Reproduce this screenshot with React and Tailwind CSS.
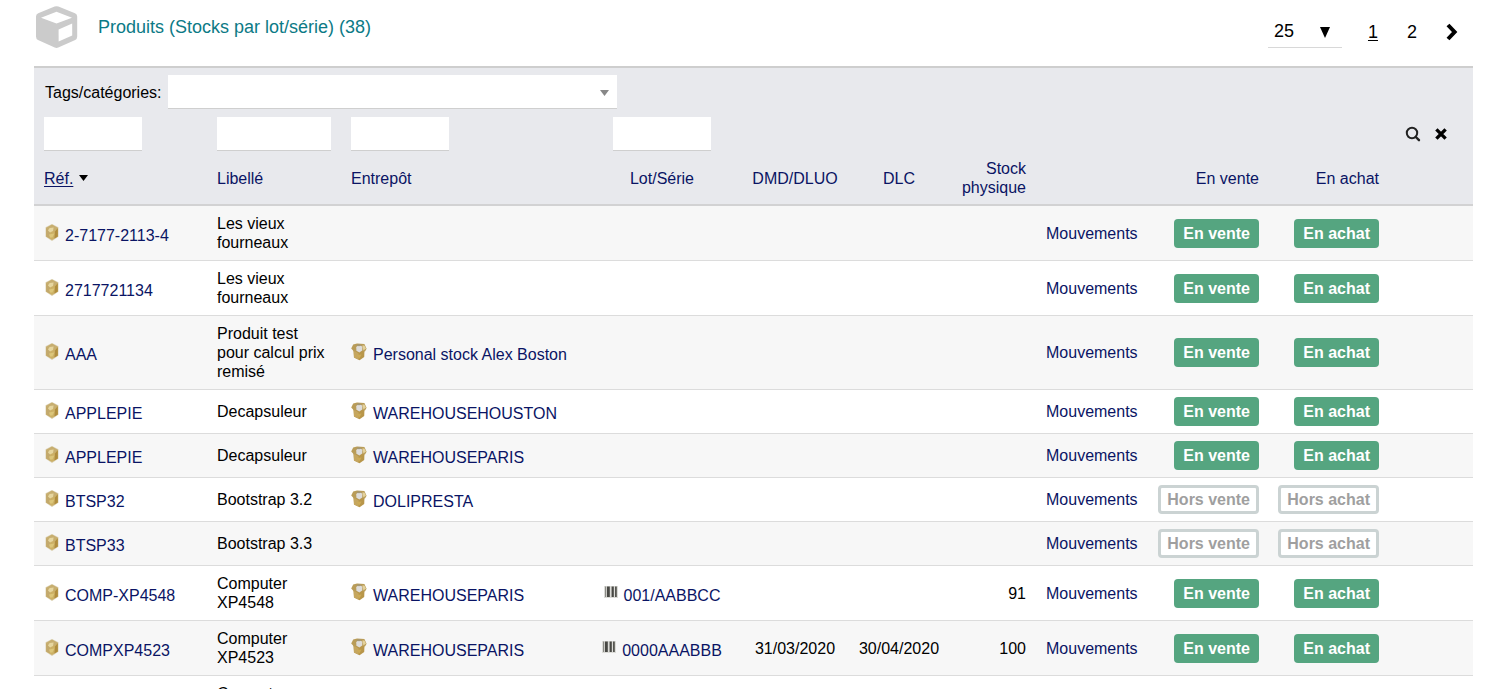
import React, { useState } from "react";

const products = [
  { id: 1, ref: "2-7177-2113-4", label: "Les vieux fourneaux", onSale: true },
  { id: 2, ref: "2717721134", label: "Les vieux fourneaux", onSale: true },
  {
    id: 3,
    ref: "AAA",
    label: "Produit test pour calcul prix remisé",
    warehouse: "Personal stock Alex Boston",
    onSale: true,
  },
  { id: 4, ref: "APPLEPIE", label: "Decapsuleur", warehouse: "WAREHOUSEHOUSTON", onSale: true },
  { id: 5, ref: "APPLEPIE", label: "Decapsuleur", warehouse: "WAREHOUSEPARIS", onSale: true },
  { id: 6, ref: "BTSP32", label: "Bootstrap 3.2", warehouse: "DOLIPRESTA", onSale: false },
  { id: 7, ref: "BTSP33", label: "Bootstrap 3.3", onSale: false },
  {
    id: 8,
    ref: "COMP-XP4548",
    label: "Computer XP4548",
    warehouse: "WAREHOUSEPARIS",
    lot: "001/AABBCC",
    stock: 91,
    onSale: true,
  },
  {
    id: 9,
    ref: "COMPXP4523",
    label: "Computer XP4523",
    warehouse: "WAREHOUSEPARIS",
    lot: "0000AAABBB",
    dluo: "31/03/2020",
    dlc: "30/04/2020",
    stock: 100,
    onSale: true,
  },
  { id: 10, ref: "COMPXP4523", label: "Computer XP4523", warehouse: "WAREHOUSEPARIS", onSale: true },
];

const CubeIcon = () => (
  <svg width="42" height="42" viewBox="0 0 42 42" aria-hidden="true">
    <path
      d="M18.6 .6Q20.5 -.2 22.4 .6L39 7.2Q41.2 8.2 41.2 10.6V30.6Q41.2 33 39.2 34L22.3 41.5Q20.5 42.3 18.7 41.5L2 34Q0 33 0 30.6V10.6Q0 8.2 2.2 7.2Z"
      fill="#cbcbcb"
    />
    <path d="M20.5 5.8L36 11.8L20.5 17.6L5 11.8Z" fill="#fff" />
    <path d="M22.6 23.4L36.2 17.6V29.4L22.6 35.6Z" fill="#fff" />
  </svg>
);

const ProductIcon = () => (
  <svg width="14" height="17" viewBox="0 0 14 17" className="shrink-0" aria-hidden="true">
    <path d="M7 0L13.4 3.2V12.8L7 17L.6 12.8V3.2Z" fill="#d8ccab" />
    <path d="M7 .8L12.8 4V12.4L7 16L1.2 12.4V4Z" fill="#ccb065" />
    <path d="M1.2 4L5 7.4V14.6L1.2 12.4Z" fill="#c3a96c" />
    <path d="M12.8 4L10 7.6L9.4 14.4L12.8 12.4Z" fill="#b08d3e" />
    <path d="M7 .8L12.8 4L10 6.6L5 7.4L1.2 4Z" fill="#c7ae70" />
    <path d="M4.6 4L8.6 3.4L8 7L5 8.4L3 6.4Z" fill="#e6d69f" />
    <path d="M4 10.4L9.4 9.6L7.4 13.6L5 13.4Z" fill="#dcc679" />
  </svg>
);

const WarehouseIcon = () => (
  <svg width="16" height="18" viewBox="0 0 16 18" className="shrink-0" aria-hidden="true">
    <path d="M2.4 5L13.6 5L13.2 14L8.6 17.2L3 14.4Z" fill="#b8964a" />
    <path d="M2.6 7L7.6 10.4V16.8L3 14.4Z" fill="#c5a65f" />
    <path d="M.2 5.4L2.2 1.6L6 .6L13.4 1L15.6 5.8L14 8.6L11 8L3 8.6Z" fill="#b99c58" />
    <path d="M11.4 2.6L13.4 2.4L15 5.6L12.4 7.4Z" fill="#e4d29c" />
    <path d="M5.2 4L8.2 1.8L11.4 3.8L11.2 7.4L8.4 9.6L5.4 7.8Z" fill="#dddcda" />
    <path d="M5 2.6L8 1L11 2.4L8 3.2Z" fill="#a59876" />
    <path d="M5.4 12L10.6 11.6L8.4 15.4Z" fill="#ccaa55" />
  </svg>
);

const BarcodeIcon = () => (
  <svg width="14" height="13" viewBox="0 0 14 13" className="shrink-0" aria-hidden="true">
    <path d="M0 0H14V12H0Z" fill="#dcdcd8" />
    <path d="M1 .5H2.2V11H1Z" fill="#8a8a86" />
    <path d="M3 .5H5.8V11H3ZM7.6 .5H9.8V11H7.6Z" fill="#484844" />
    <path d="M11 .5H12.8V11H11Z" fill="#555550" />
  </svg>
);

const SearchIcon = () => (
  <svg width="16" height="16" viewBox="0 0 16 16" fill="none" stroke="#222" aria-hidden="true">
    <circle cx="7" cy="7" r="5.2" strokeWidth="2" />
    <path d="M10.8 11L14 14.2" strokeWidth="2.4" strokeLinecap="round" />
  </svg>
);

const ClearIcon = () => (
  <svg width="12" height="12" viewBox="0 0 12 12" aria-hidden="true">
    <path d="M2.6 2.6L9.4 9.4M9.4 2.6L2.6 9.4" stroke="#000" strokeWidth="3.4" strokeLinecap="square" />
  </svg>
);

const StatusBadge = ({ active, onText, offText }) =>
  active ? (
    <span className="rounded bg-[#55a580] px-[9px] py-[5px] font-bold whitespace-nowrap text-white">{onText}</span>
  ) : (
    <span className="rounded border-3 border-[#cbd3d3] bg-white px-[6px] py-[2px] font-bold whitespace-nowrap text-[#9f9f9f]">
      {offText}
    </span>
  );

const IconLink = ({ icon, children }) => (
  <a href="#" className="inline-flex items-center gap-[6px] pt-1 align-middle whitespace-nowrap">
    <span className="pb-[6px]">{icon}</span>
    {children}
  </a>
);

const FilterInput = ({ label, value, onChange, className }) => (
  <input
    type="text"
    aria-label={label}
    value={value}
    onChange={(e) => onChange(e.target.value)}
    className={`block h-[34px] border-b border-[#cfcfcf] bg-white px-1 text-black outline-none ${className}`}
  />
);

const App = () => {
  // Filters
  const [limit, setLimit] = useState("25");
  const [category, setCategory] = useState("");
  const [searchRef, setSearchRef] = useState("");
  const [searchLabel, setSearchLabel] = useState("");
  const [searchWarehouse, setSearchWarehouse] = useState("");
  const [searchLot, setSearchLot] = useState("");

  const clearFilters = () => {
    setCategory("");
    setSearchRef("");
    setSearchLabel("");
    setSearchWarehouse("");
    setSearchLot("");
  };

  const matches = (text, search) => (text || "").toLowerCase().includes(search.toLowerCase());

  const filtered = products.filter(
    (p) =>
      matches(p.ref, searchRef) &&
      matches(p.label, searchLabel) &&
      matches(p.warehouse, searchWarehouse) &&
      matches(p.lot, searchLot)
  );

  return (
    <div className="h-screen overflow-hidden bg-white pr-4 pl-[34px] font-['Liberation_Sans',Arial,sans-serif] text-[16px] leading-[19px] text-black">
      {/* TITLE AND PAGINATION */}
      <header className="flex h-[66px] items-start justify-between pt-[6px] pl-[2px] text-[18px] leading-[22px]">
        <div className="flex items-center gap-5">
          <CubeIcon />
          <h1 className="text-[#0c7a86]">Produits (Stocks par lot/série) (38)</h1>
        </div>

        <nav className="flex items-center pt-[9px] pr-[15px]">
          <div className="relative mr-[26px]">
            <select
              aria-label="Nombre de lignes"
              value={limit}
              onChange={(e) => setLimit(e.target.value)}
              className="h-[33px] w-[74px] appearance-none border-b border-[#d8d8d8] pl-[6px] outline-none"
            >
              <option>25</option>
              <option>50</option>
              <option>100</option>
            </select>
            <svg
              width="10"
              height="11"
              viewBox="0 0 10 11"
              className="pointer-events-none absolute top-3 right-3"
              aria-hidden="true"
            >
              <path d="M0 0H10L5 11Z" />
            </svg>
          </div>
          <a href="#" className="mr-[29px] underline underline-offset-2">
            1
          </a>
          <a href="#" className="mr-[29px]">
            2
          </a>
          <a href="#" aria-label="Suivant">
            <svg width="12" height="18" viewBox="0 0 12 18" fill="none" aria-hidden="true">
              <path d="M2 2L8.6 9L2 16" stroke="#000" strokeWidth="4" />
            </svg>
          </a>
        </nav>
      </header>

      {/* CATEGORY FILTER */}
      <div className="flex items-center border-t-2 border-[#cecece] bg-[#e8e9ed] pt-[7px] pb-1 pl-[11px]">
        <label htmlFor="category">Tags/catégories:</label>
        <div className="relative ml-[6px]">
          <select
            id="category"
            value={category}
            onChange={(e) => setCategory(e.target.value)}
            className="block h-[34px] w-[449px] appearance-none border-b border-[#cfcfcf] bg-white px-2 outline-none"
          >
            <option value=""></option>
          </select>
          <svg
            width="9"
            height="6"
            viewBox="0 0 9 6"
            className="pointer-events-none absolute top-[15px] right-2"
            aria-hidden="true"
          >
            <path d="M0 0H9L4.5 6Z" fill="#888" />
          </svg>
        </div>
      </div>

      {/* TABLE */}
      <table className="w-full table-fixed border-collapse">
        <colgroup>
          <col className="w-[173px]" />
          <col className="w-[134px]" />
          <col className="w-[241px]" />
          <col className="w-[160px]" />
          <col className="w-[106px]" />
          <col className="w-[102px]" />
          <col className="w-[86px]" />
          <col className="w-[113px]" />
          <col className="w-[120px]" />
          <col className="w-[120px]" />
          <col className="w-[84px]" />
        </colgroup>
        <thead className="bg-[#e8e9ed] text-[#0a1464]">
          <tr>
            <td className="px-[10px] pt-1">
              <FilterInput label="Réf." value={searchRef} onChange={setSearchRef} className="w-[98px]" />
            </td>
            <td className="px-[10px] pt-1">
              <FilterInput label="Libellé" value={searchLabel} onChange={setSearchLabel} className="w-full" />
            </td>
            <td className="px-[10px] pt-1">
              <FilterInput
                label="Entrepôt"
                value={searchWarehouse}
                onChange={setSearchWarehouse}
                className="w-[98px]"
              />
            </td>
            <td className="px-[10px] pt-1">
              <FilterInput label="Lot/Série" value={searchLot} onChange={setSearchLot} className="mx-auto w-[98px]" />
            </td>
            <td colSpan={6}></td>
            <td className="pt-1 pl-4">
              <div className="flex items-center gap-[14px]">
                <button type="button" aria-label="Rechercher">
                  <SearchIcon />
                </button>
                <button type="button" aria-label="Effacer" onClick={clearFilters}>
                  <ClearIcon />
                </button>
              </div>
            </td>
          </tr>
          <tr className="border-b-2 border-[#d2d2d3] *:px-[10px] *:pt-2 *:pb-[7px] *:font-normal">
            <th className="text-left">
              <a href="#" className="underline underline-offset-2">
                Réf.
              </a>
              <svg width="9" height="6" viewBox="0 0 9 6" className="ml-[6px] inline-block align-[3px]" aria-hidden="true">
                <path d="M0 0H9L4.5 6Z" fill="#000" />
              </svg>
            </th>
            <th className="text-left">
              <a href="#">Libellé</a>
            </th>
            <th className="text-left">
              <a href="#">Entrepôt</a>
            </th>
            <th>
              <a href="#">Lot/Série</a>
            </th>
            <th>
              <a href="#">DMD/DLUO</a>
            </th>
            <th>
              <a href="#">DLC</a>
            </th>
            <th className="text-right">
              <a href="#">Stock physique</a>
            </th>
            <th></th>
            <th className="text-right">
              <a href="#">En vente</a>
            </th>
            <th className="text-right">
              <a href="#">En achat</a>
            </th>
            <th></th>
          </tr>
        </thead>

        <tbody>
          {filtered.map((p) => (
            <tr key={p.id} className="border-b border-[#dcdcdc] odd:bg-[#f7f7f7] *:px-[10px] *:py-[7px]">
              <td className="text-[#0a1464]">
                <div className="flex pl-px">
                  <IconLink icon={<ProductIcon />}>{p.ref}</IconLink>
                </div>
              </td>
              <td>
                <div className="py-px">{p.label}</div>
              </td>
              <td className="text-[#0a1464]">
                {p.warehouse && (
                  <div className="flex">
                    <IconLink icon={<WarehouseIcon />}>{p.warehouse}</IconLink>
                  </div>
                )}
              </td>
              <td className="text-[#0a1464]">
                {p.lot && (
                  <div className="flex justify-center">
                    <IconLink icon={<BarcodeIcon />}>{p.lot}</IconLink>
                  </div>
                )}
              </td>
              <td className="text-center">{p.dluo}</td>
              <td className="text-center">{p.dlc}</td>
              <td className="text-right">{p.stock}</td>
              <td className="text-[#0a1464]">
                <a href="#">Mouvements</a>
              </td>
              <td>
                <div className="flex justify-end">
                  <StatusBadge active={p.onSale} onText="En vente" offText="Hors vente" />
                </div>
              </td>
              <td>
                <div className="flex justify-end">
                  <StatusBadge active={p.onSale} onText="En achat" offText="Hors achat" />
                </div>
              </td>
              <td></td>
            </tr>
          ))}
        </tbody>
      </table>
    </div>
  );
};

export default App;
